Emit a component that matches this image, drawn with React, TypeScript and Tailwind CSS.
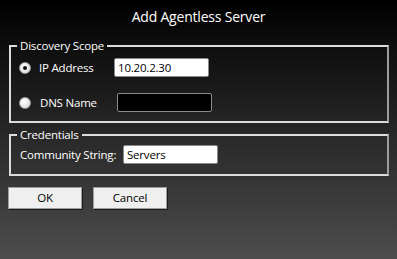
import { useState } from "react";

const FONT = { fontFamily: '"Segoe UI", "Open Sans", "Noto Sans", sans-serif' };

function Radio({ checked, onClick }: { checked: boolean; onClick: () => void }) {
  return (
    <button
      type="button"
      onClick={onClick}
      className="flex size-[12px] shrink-0 items-center justify-center rounded-full border border-[#9a9a9a] bg-[radial-gradient(circle_at_40%_35%,#ffffff,#d4d4d4)]"
    >
      {checked && <span className="size-[4px] rounded-full bg-[#111]" />}
    </button>
  );
}

export default function App() {
  const [mode, setMode] = useState<"ip" | "dns">("ip");
  const [ip, setIp] = useState("10.20.2.30");
  const [dns, setDns] = useState("");
  const [community, setCommunity] = useState("Servers");

  return (
    <div
      style={FONT}
      className="flex h-[259px] w-[397px] flex-col bg-[linear-gradient(to_bottom,#000000,#4d4d4d)] px-[9px] text-[11.5px] tracking-[-0.2px] text-white"
    >
      <h1 className="pt-[7px] pb-[11px] text-center text-[14px] leading-[20px] font-normal">Add Agentless Server</h1>

      <fieldset className="w-[380px] border-2 border-[#dcdcdc] border-r-[#9c9c9c] pr-[8px] pb-[9px] pl-[8px]">
        <legend className="ml-[-2px] px-[3px] leading-[16px]">Discovery Scope</legend>
        <div className="flex items-center pt-[4px]">
          <Radio checked={mode === "ip"} onClick={() => setMode("ip")} />
          <span className="ml-[8px] w-[75px] shrink-0 whitespace-nowrap">IP Address</span>
          <input
            value={ip}
            onChange={(e) => setIp(e.target.value)}
            className="h-[19px] w-[95px] rounded-[2px] border border-[#8a8a8a] bg-white px-[3px] text-[11.5px] text-black outline-none"
          />
        </div>
        <div className="mt-[16px] flex items-center">
          <Radio checked={mode === "dns"} onClick={() => setMode("dns")} />
          <span className="ml-[9px] w-[77px] shrink-0 whitespace-nowrap">DNS Name</span>
          <input
            value={dns}
            onChange={(e) => setDns(e.target.value)}
            className="h-[19px] w-[95px] rounded-[2px] border border-[#8a8a8a] bg-black px-[3px] text-[11.5px] text-white outline-none"
          />
        </div>
      </fieldset>

      <fieldset className="mt-[4px] w-[380px] border-2 border-[#dcdcdc] border-r-[#9c9c9c] pr-[8px] pb-[10px] pl-[9px]">
        <legend className="ml-[-3px] px-[3px] leading-[16px]">Credentials</legend>
        <div className="flex items-center pt-[2px]">
          <span className="w-[103px] shrink-0 whitespace-nowrap">Community String:</span>
          <input
            value={community}
            onChange={(e) => setCommunity(e.target.value)}
            className="h-[19px] w-[95px] rounded-[2px] border border-[#8a8a8a] bg-white px-[3px] text-[11.5px] text-black outline-none"
          />
        </div>
      </fieldset>

      <div className="mt-[11px] flex gap-[11px]">
        <button className="-ml-px h-[22px] w-[74px] border border-[#a0a0a0] bg-[#efefef] text-[11.5px] text-black shadow-[1px_1px_0_#1a1a1a]">
          OK
        </button>
        <button className="h-[22px] w-[74px] border border-[#a0a0a0] bg-[#efefef] text-[11.5px] text-black shadow-[1px_1px_0_#1a1a1a]">
          Cancel
        </button>
      </div>
    </div>
  );
}
